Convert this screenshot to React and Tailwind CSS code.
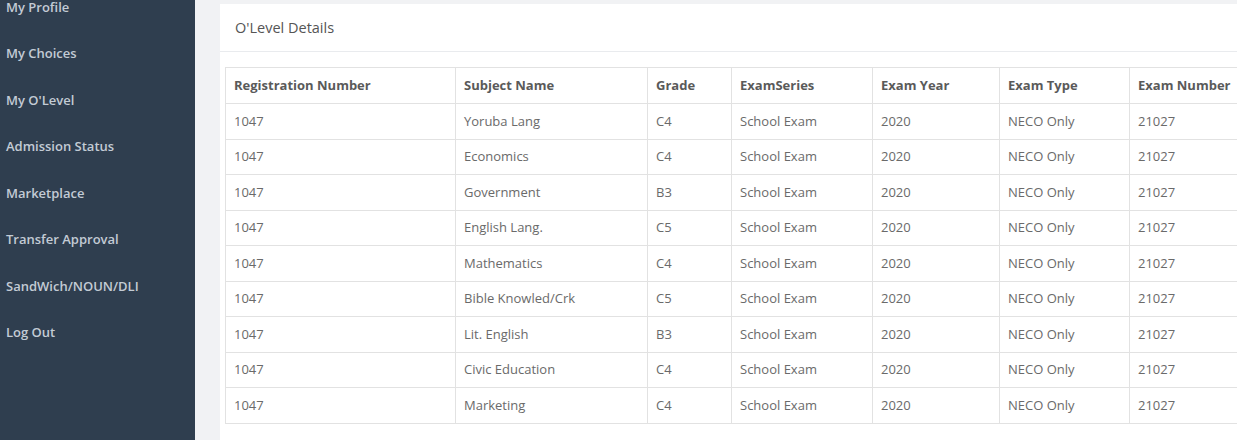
import React from "react";

const menu = [
  "My Profile",
  "My Choices",
  "My O'Level",
  "Admission Status",
  "Marketplace",
  "Transfer Approval",
  "SandWich/NOUN/DLI",
  "Log Out",
];

const subjects = [
  ["Yoruba Lang", "C4"],
  ["Economics", "C4"],
  ["Government", "B3"],
  ["English Lang.", "C5"],
  ["Mathematics", "C4"],
  ["Bible Knowled/Crk", "C5"],
  ["Lit. English", "B3"],
  ["Civic Education", "C4"],
  ["Marketing", "C4"],
];

const headers = [
  ["Registration Number", "w-[230px]"],
  ["Subject Name", "w-[192px]"],
  ["Grade", "w-[84px]"],
  ["ExamSeries", "w-[141px]"],
  ["Exam Year", "w-[127px]"],
  ["Exam Type", "w-[130px]"],
  ["Exam Number", "w-[130px]"],
];

const App = () => {
  return (
    <div
      className="flex w-[1237px] h-[440px] overflow-hidden bg-[#f1f2f4]"
      style={{ fontFamily: '"Open Sans", "Liberation Sans", sans-serif' }}
    >
      <aside className="w-[195px] shrink-0 h-full bg-[#2f3e4f]">
        <ul className="-mt-[16px] flex flex-col">
          {menu.map((item) => (
            <li
              key={item}
              className="h-[46.5px] flex items-center pl-[6px] text-[13px] font-semibold text-[#c3cbd5]"
            >
              {item}
            </li>
          ))}
        </ul>
      </aside>

      <main className="flex-1 pl-[25px] pt-[4px] overflow-hidden">
        <div className="bg-white w-[1100px] h-[460px]">
          <div className="h-[48px] flex items-center pl-[15px] border-b border-[#e9ebee] text-[14.5px] text-[#555]">
            O'Level Details
          </div>
          <div className="pt-[15px] pl-[5px]">
            <table className="border-collapse text-[13px] text-[#6a6a6a] table-fixed">
              <thead>
                <tr className="h-[36px]">
                  {headers.map(([h, w]) => (
                    <th
                      key={h}
                      className={`${w} border border-[#e2e2e2] text-left font-bold text-[#5a5a5a] px-[8px]`}
                    >
                      {h}
                    </th>
                  ))}
                </tr>
              </thead>
              <tbody>
                {subjects.map(([name, grade]) => (
                  <tr key={name} className="h-[35.5px]">
                    <td className="border border-[#e2e2e2] px-[8px]">1047</td>
                    <td className="border border-[#e2e2e2] px-[8px]">{name}</td>
                    <td className="border border-[#e2e2e2] px-[8px]">{grade}</td>
                    <td className="border border-[#e2e2e2] px-[8px]">School Exam</td>
                    <td className="border border-[#e2e2e2] px-[8px]">2020</td>
                    <td className="border border-[#e2e2e2] px-[8px]">NECO Only</td>
                    <td className="border border-[#e2e2e2] px-[8px]">21027</td>
                  </tr>
                ))}
              </tbody>
            </table>
          </div>
        </div>
      </main>
    </div>
  );
};

export default App;
